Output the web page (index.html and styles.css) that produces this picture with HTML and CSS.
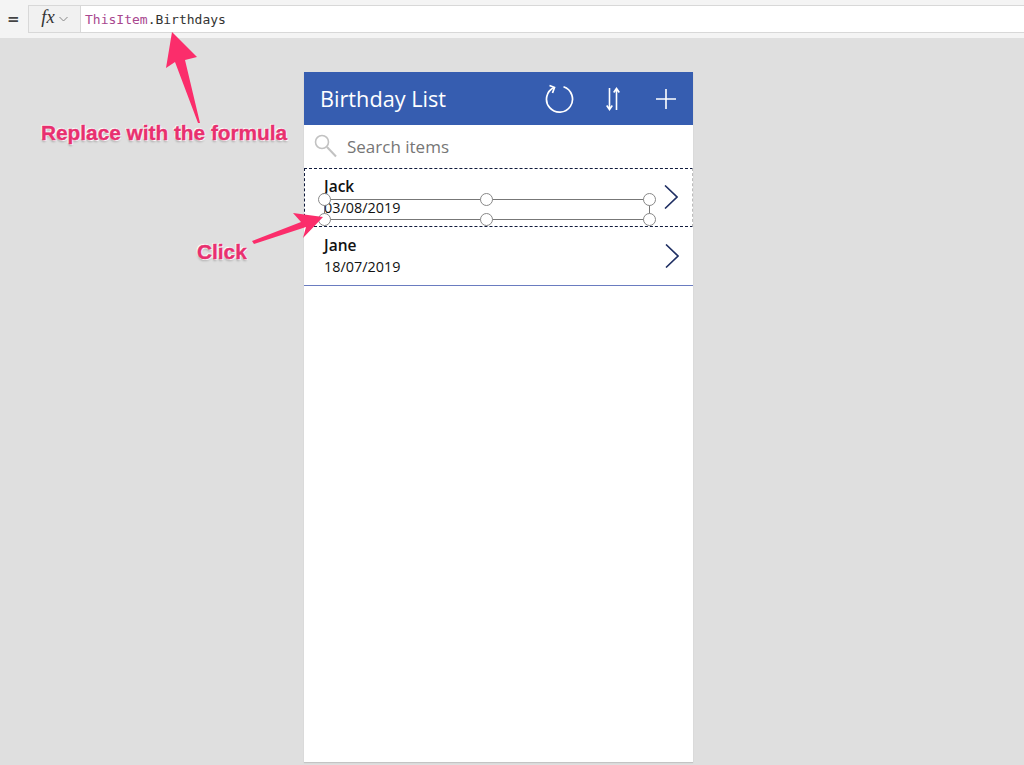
FILE: index.html
```html
<!DOCTYPE html>
<html lang="en">
<head>
  <meta charset="UTF-8">
  <title>Birthday List</title>
  <link rel="stylesheet" href="styles.css">
</head>
<body>
  <div class="topbar">
    <span class="equals">=</span>
    <div class="formula">
      <div class="fx">
        <span class="fx-label">fx</span>
        <svg class="fx-caret" width="9" height="6" viewBox="0 0 9 6"><path d="M0.5 1 L4.5 5 L8.5 1" fill="none" stroke="#888" stroke-width="1"/></svg>
      </div>
      <div class="code"><span class="code-key">ThisItem</span>.Birthdays</div>
    </div>
  </div>

  <div class="stage">
    <div class="phone">
      <div class="header">
        <span class="title">Birthday List</span>
        <div class="header-icons">
          <svg class="icon-refresh" width="30" height="30" viewBox="0 0 30 30" fill="none" stroke="#fff" stroke-width="1.7">
            <path d="M10 3.4 A13 13 0 1 0 19.5 2.8"/>
            <path d="M5.5 1.5 L10.5 3.5 L8.5 9"/>
          </svg>
          <svg class="icon-sort" width="14" height="24" viewBox="0 0 14 24" fill="none" stroke="#fff" stroke-width="1.6">
            <path d="M3.5 1 V22.5 M0.7 18.5 L3.5 22.5 L6.3 18.5"/>
            <path d="M10.5 23 V1.5 M7.7 5.5 L10.5 1.5 L13.3 5.5"/>
          </svg>
          <svg width="22" height="22" viewBox="0 0 22 22" fill="none" stroke="#fff" stroke-width="1.6">
            <path d="M11 1 V21 M1 11 H21"/>
          </svg>
        </div>
      </div>

      <div class="search">
        <svg width="23" height="24" viewBox="0 0 23 24" fill="none" stroke="#c2c2c2" stroke-width="1.6">
          <circle cx="8" cy="8" r="6.5"/>
          <path d="M13 13 L22 22.5" stroke-width="2"/>
        </svg>
        <span>Search items</span>
      </div>

      <div class="row row-selected">
        <div class="row-text">
          <div class="name">Jack</div>
          <div class="date">03/08/2019</div>
        </div>
        <svg class="chevron" width="14" height="24" viewBox="0 0 14 24"><path d="M1 0.5 L13 12 L1 23.5" fill="none" stroke="#1f2f63" stroke-width="1.6"/></svg>
        <div class="selection">
          <i class="handle h-tl"></i><i class="handle h-tm"></i><i class="handle h-tr"></i>
          <i class="handle h-bl"></i><i class="handle h-bm"></i><i class="handle h-br"></i>
        </div>
      </div>

      <div class="row row-last">
        <div class="row-text">
          <div class="name">Jane</div>
          <div class="date">18/07/2019</div>
        </div>
        <svg class="chevron" width="14" height="24" viewBox="0 0 14 24"><path d="M1 0.5 L13 12 L1 23.5" fill="none" stroke="#1f2f63" stroke-width="1.6"/></svg>
      </div>
    </div>
  </div>

  <!-- annotations on top of the screenshot -->
  <svg class="arrows" width="1024" height="765" viewBox="0 0 1024 765">
    <polygon points="172,32 197,57 185,60 200,123 198,123 175,62 166,68" fill="#fb2d6b"/>
    <polygon points="323,217 303,238 306,227 254,244 252,241 301,222 293,213" fill="#fb2d6b"/>
  </svg>
  <div class="note note-replace">Replace with the formula</div>
  <div class="note note-click">Click</div>
</body>
</html>
```

FILE: styles.css
```css
* {
  box-sizing: border-box;
}

body {
  margin: 0;
  height: 765px;
  overflow: hidden;
  font-family: "Open Sans", Arial, sans-serif;
  background: #dfdfdf;
}

.topbar {
  height: 38px;
  display: flex;
  align-items: flex-start;
  padding: 5px 0 0 7px;
  background: #f4f4f4;
}

.equals {
  width: 21px;
  font-family: "DejaVu Sans", sans-serif;
  font-size: 15px;
  font-weight: bold;
  line-height: 29px;
  color: #444;
}

.formula {
  flex: 1;
  height: 28px;
  display: flex;
  background: white;
  border: 1px solid #d8d8d8;
  border-right: none;
}

.fx {
  width: 52px;
  display: flex;
  align-items: center;
  justify-content: center;
  gap: 4px;
  background: #f1f1f1;
  border-right: 1px solid #d8d8d8;
}

.fx-label {
  font-family: "Liberation Serif", serif;
  font-style: italic;
  font-size: 18.5px;
  color: #333;
  margin-bottom: 3px;
}

.code {
  padding-left: 4px;
  font-family: "DejaVu Sans Mono", monospace;
  font-size: 13px;
  line-height: 28px;
  color: #333;
}

.code-key {
  color: #a9478f;
}

.stage {
  padding: 34px 0 0 304px;
}

.phone {
  width: 389px;
  height: 690px;
  background: white;
  box-shadow: 0 1px 1px #c4c4c4;
}

.header {
  height: 53px;
  display: flex;
  align-items: center;
  justify-content: space-between;
  padding: 0 16px;
  background: #365db0;
}

.title {
  font-size: 21.7px;
  color: white;
}

.header-icons {
  display: flex;
  align-items: center;
}

.icon-refresh {
  margin-right: 32px;
}

.icon-sort {
  margin-right: 35px;
}

.search {
  height: 42px;
  display: flex;
  align-items: center;
  gap: 10px;
  padding-left: 10px;
  font-size: 17px;
  color: #767676;
}

.row {
  position: relative;
  height: 59px;
  display: flex;
  align-items: center;
  justify-content: space-between;
  padding: 0 14px 0 19px;
}

.row-selected {
  margin-top: 1px;
  padding-bottom: 2px;
  border: 1px dashed #bbb;
  border-top: 1px dashed #0f1a3c;
  border-bottom: 1px dashed #0f1a3c;
  border-left-color: #0f1a3c;
}

.row-last {
  padding-left: 20px;
  border-bottom: 1px solid #6a7cc0;
}

.row-text {
  color: #111;
}

.name {
  font-size: 15.5px;
  font-weight: 600;
  line-height: 22px;
}

.date {
  font-size: 14.4px;
  line-height: 22px;
}

.selection {
  position: absolute;
  left: 19px;
  top: 30px;
  width: 326px;
  height: 21px;
  border: 1px solid #777;
}

.handle {
  position: absolute;
  width: 13px;
  height: 13px;
  background: white;
  border: 1px solid #888;
  border-radius: 50%;
}

.h-tl { left: -7px; top: -7px; }
.h-tm { left: 155px; top: -7px; }
.h-tr { right: -7px; top: -7px; }
.h-bl { left: -7px; bottom: -7px; }
.h-bm { left: 155px; bottom: -7px; }
.h-br { right: -7px; bottom: -7px; }

.arrows {
  position: absolute;
  left: 0;
  top: 0;
}

.note {
  position: absolute;
  font-family: "Liberation Sans", Arial, sans-serif;
  font-weight: bold;
  font-size: 20.8px;
  color: #e8306f;
  -webkit-text-stroke: 0.4px #e8306f;
  text-shadow: 0 0 2px white, 1px 1px 1px white, -1px -1px 1px white, 0 2px 2px rgba(0, 0, 0, 0.25);
}

.note-replace {
  left: 41px;
  top: 121px;
}

.note-click {
  left: 197px;
  top: 240px;
}
```
